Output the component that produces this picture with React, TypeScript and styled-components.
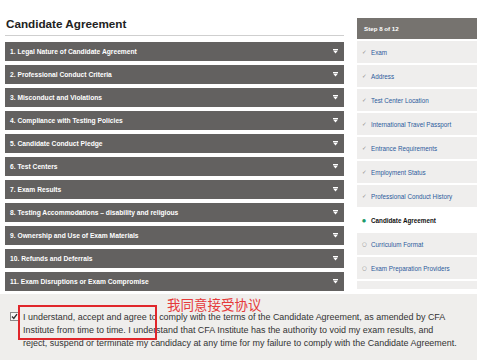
import React from "react";
import styled, { createGlobalStyle } from "styled-components";

const sections = [
  "1. Legal Nature of Candidate Agreement",
  "2. Professional Conduct Criteria",
  "3. Misconduct and Violations",
  "4. Compliance with Testing Policies",
  "5. Candidate Conduct Pledge",
  "6. Test Centers",
  "7. Exam Results",
  "8. Testing Accommodations – disability and religious",
  "9. Ownership and Use of Exam Materials",
  "10. Refunds and Deferrals",
  "11. Exam Disruptions or Exam Compromise",
];

type StepState = "done" | "current" | "todo";

const steps: { label: string; state: StepState }[] = [
  { label: "Exam", state: "done" },
  { label: "Address", state: "done" },
  { label: "Test Center Location", state: "done" },
  { label: "International Travel Passport", state: "done" },
  { label: "Entrance Requirements", state: "done" },
  { label: "Employment Status", state: "done" },
  { label: "Professional Conduct History", state: "done" },
  { label: "Candidate Agreement", state: "current" },
  { label: "Curriculum Format", state: "todo" },
  { label: "Exam Preparation Providers", state: "todo" },
  { label: "Summary", state: "todo" },
];

const App: React.FC = () => {
  return (
    <Page>
      <GlobalStyle />
      <Top>
        <Main>
          <Title>Candidate Agreement</Title>
          <Sections>
            {sections.map((s) => (
              <SectionRow key={s}>
                <span>{s}</span>
                <Arrow width="5" height="5" viewBox="0 0 5 5">
                  <rect x="0" y="0" width="5" height="1" fill="#fff" />
                  <path d="M0 1.6 H5 L2.5 4.6 Z" fill="#fff" />
                </Arrow>
              </SectionRow>
            ))}
          </Sections>
        </Main>
        <Sidebar>
          <StepHeader>Step 8 of 12</StepHeader>
          {steps.map((s) => (
            <StepItem key={s.label} state={s.state}>
              <Marker state={s.state}>
                {s.state === "done" ? "✓" : s.state === "current" ? "●" : "○"}
              </Marker>
              {s.label}
            </StepItem>
          ))}
        </Sidebar>
      </Top>
      <AgreeBox>
        <Check>
          <svg width="7" height="7" viewBox="0 0 7 7">
            <path d="M1 3.6 L2.8 5.4 L6 1.2" stroke="#333" strokeWidth="1.4" fill="none" />
          </svg>
        </Check>
        <AgreeText>
          I understand, accept and agree to comply with the terms of the Candidate Agreement, as amended by CFA
          <br />
          Institute from time to time. I understand that CFA Institute has the authority to void my exam results, and
          <br />
          reject, suspend or terminate my candidacy at any time for my failure to comply with the Candidate Agreement.
        </AgreeText>
        <Highlight />
        <Note>我同意接受协议</Note>
      </AgreeBox>
    </Page>
  );
};

const GlobalStyle = createGlobalStyle`
  body {
    margin: 0;
    background: #ffffff;
    font-family: "Liberation Sans", Arial, sans-serif;
  }
`;

const Page = styled.div`
  width: 477px;
  height: 360px;
  overflow: hidden;
  display: flex;
  flex-direction: column;
`;

const Top = styled.div`
  height: 294px;
  display: flex;
  flex-shrink: 0;
`;

const Main = styled.div`
  width: 339px;
  margin-left: 5px;
`;

const Title = styled.h1`
  margin: 0;
  padding: 17px 0 4px 1px;
  font-size: 11.7px;
  line-height: 14px;
  font-weight: bold;
  color: #222;
  border-bottom: 1px solid #cfcfcf;
`;

const Sections = styled.div`
  margin-top: 6px;
  display: flex;
  flex-direction: column;
  gap: 4px;
`;

const SectionRow = styled.div`
  height: 19px;
  background: #636160;
  color: #fff;
  font-size: 6.7px;
  font-weight: bold;
  display: flex;
  align-items: center;
  justify-content: space-between;
  padding: 0 6px 0 5px;
`;

const Arrow = styled.svg`
  display: block;
`;

const Sidebar = styled.div`
  width: 120px;
  margin-left: 13px;
  padding-top: 18px;
  height: 289px;
  box-sizing: border-box;
  overflow: hidden;
  display: flex;
  flex-direction: column;
  gap: 2px;
`;

const StepHeader = styled.div`
  height: 21px;
  flex-shrink: 0;
  background: #76736f;
  color: #fff;
  font-size: 6.2px;
  font-weight: bold;
  display: flex;
  align-items: center;
  padding-left: 7px;
`;

const StepItem = styled.div<{ state: StepState }>`
  height: 22px;
  flex-shrink: 0;
  background: ${(p) => (p.state === "current" ? "#ffffff" : "#efeeed")};
  color: ${(p) => (p.state === "current" ? "#111" : "#2c5b9c")};
  font-weight: ${(p) => (p.state === "current" ? "bold" : "normal")};
  font-size: 6.3px;
  display: flex;
  align-items: center;
  padding-left: 5px;
`;

const Marker = styled.span<{ state: StepState }>`
  width: 9px;
  font-weight: normal;
  font-family: "DejaVu Sans", sans-serif;
  font-size: ${(p) => (p.state === "current" ? "4.5px" : "5.5px")};
  color: ${(p) => (p.state === "current" ? "#1c9a6c" : "#8a8a8a")};
`;

const AgreeBox = styled.div`
  position: relative;
  flex: 1;
  background: #efeeec;
  display: flex;
  align-items: flex-start;
  padding: 17px 0 0 10px;
`;

const Check = styled.span`
  width: 7px;
  height: 7px;
  margin-top: 1px;
  border: 1px solid #8a8a8a;
  background: #f6f6f6;
  display: flex;
  align-items: center;
  justify-content: center;
`;

const AgreeText = styled.p`
  margin: 0 0 0 4px;
  font-size: 8.95px;
  line-height: 13px;
  color: #333;
  white-space: nowrap;
`;

const Highlight = styled.div`
  position: absolute;
  left: 18px;
  top: 11px;
  width: 135px;
  height: 31px;
  border: 2px solid #e0262b;
`;

const Note = styled.div`
  position: absolute;
  left: 167px;
  top: 4px;
  font-family: "Noto Sans CJK SC", sans-serif;
  font-size: 13.5px;
  line-height: 1;
  color: #e53a3a;
`;

export default App;
